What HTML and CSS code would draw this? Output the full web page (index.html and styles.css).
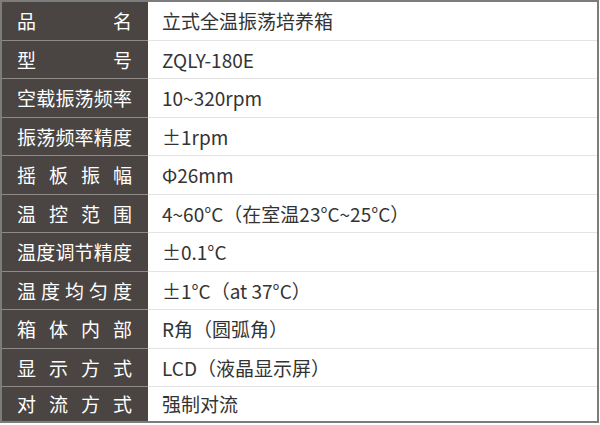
FILE: index.html
```html
<!DOCTYPE html>
<html lang="zh-CN">
<head>
<meta charset="utf-8">
<title>规格参数</title>
<link rel="stylesheet" href="styles.css">
</head>
<body>
<div class="spec">
  <div class="row"><div class="k">品名</div><div class="v">立式全温振荡培养箱</div></div>
  <div class="row"><div class="k">型号</div><div class="v">ZQLY-180E</div></div>
  <div class="row"><div class="k">空载振荡频率</div><div class="v">10~320rpm</div></div>
  <div class="row"><div class="k">振荡频率精度</div><div class="v">±1rpm</div></div>
  <div class="row"><div class="k">摇板振幅</div><div class="v">Φ26mm</div></div>
  <div class="row"><div class="k">温控范围</div><div class="v">4~60°C（在室温23°C~25°C）</div></div>
  <div class="row"><div class="k">温度调节精度</div><div class="v">±0.1°C</div></div>
  <div class="row"><div class="k">温度均匀度</div><div class="v">±1°C（at 37°C）</div></div>
  <div class="row"><div class="k">箱体内部</div><div class="v">R角（圆弧角）</div></div>
  <div class="row"><div class="k">显示方式</div><div class="v">LCD（液晶显示屏）</div></div>
  <div class="row last"><div class="k">对流方式</div><div class="v">强制对流</div></div>
</div>
</body>
</html>
```

FILE: styles.css
```css
html, body {
  margin: 0;
  padding: 0;
  background: #ffffff;
}

.spec {
  width: 599px;
  box-sizing: border-box;
  border: 2px solid #7c7c7c;
  font-family: "Noto Sans CJK SC", "Noto Sans", sans-serif;
  font-size: 19px;
}

.row {
  display: flex;
  height: 38.5px;
}

.row.last {
  height: 34px;
}

.k {
  width: 146px;
  flex: none;
  box-sizing: border-box;
  padding: 0 16px 0 15px;
  background: #4a4542;
  color: #ffffff;
  border-bottom: 1px solid #8d8a88;
  display: flex;
  align-items: center;
}

.k {
  text-align: justify;
  text-align-last: justify;
  text-justify: inter-character;
  display: block;
  line-height: 37.5px;
}

.v {
  flex: 1;
  box-sizing: border-box;
  padding-left: 14px;
  color: #333333;
  border-bottom: 1px solid #e3e3e3;
  line-height: 37.5px;
  white-space: nowrap;
}

.row.last .k,
.row.last .v {
  border-bottom: none;
  line-height: 34px;
}
```
